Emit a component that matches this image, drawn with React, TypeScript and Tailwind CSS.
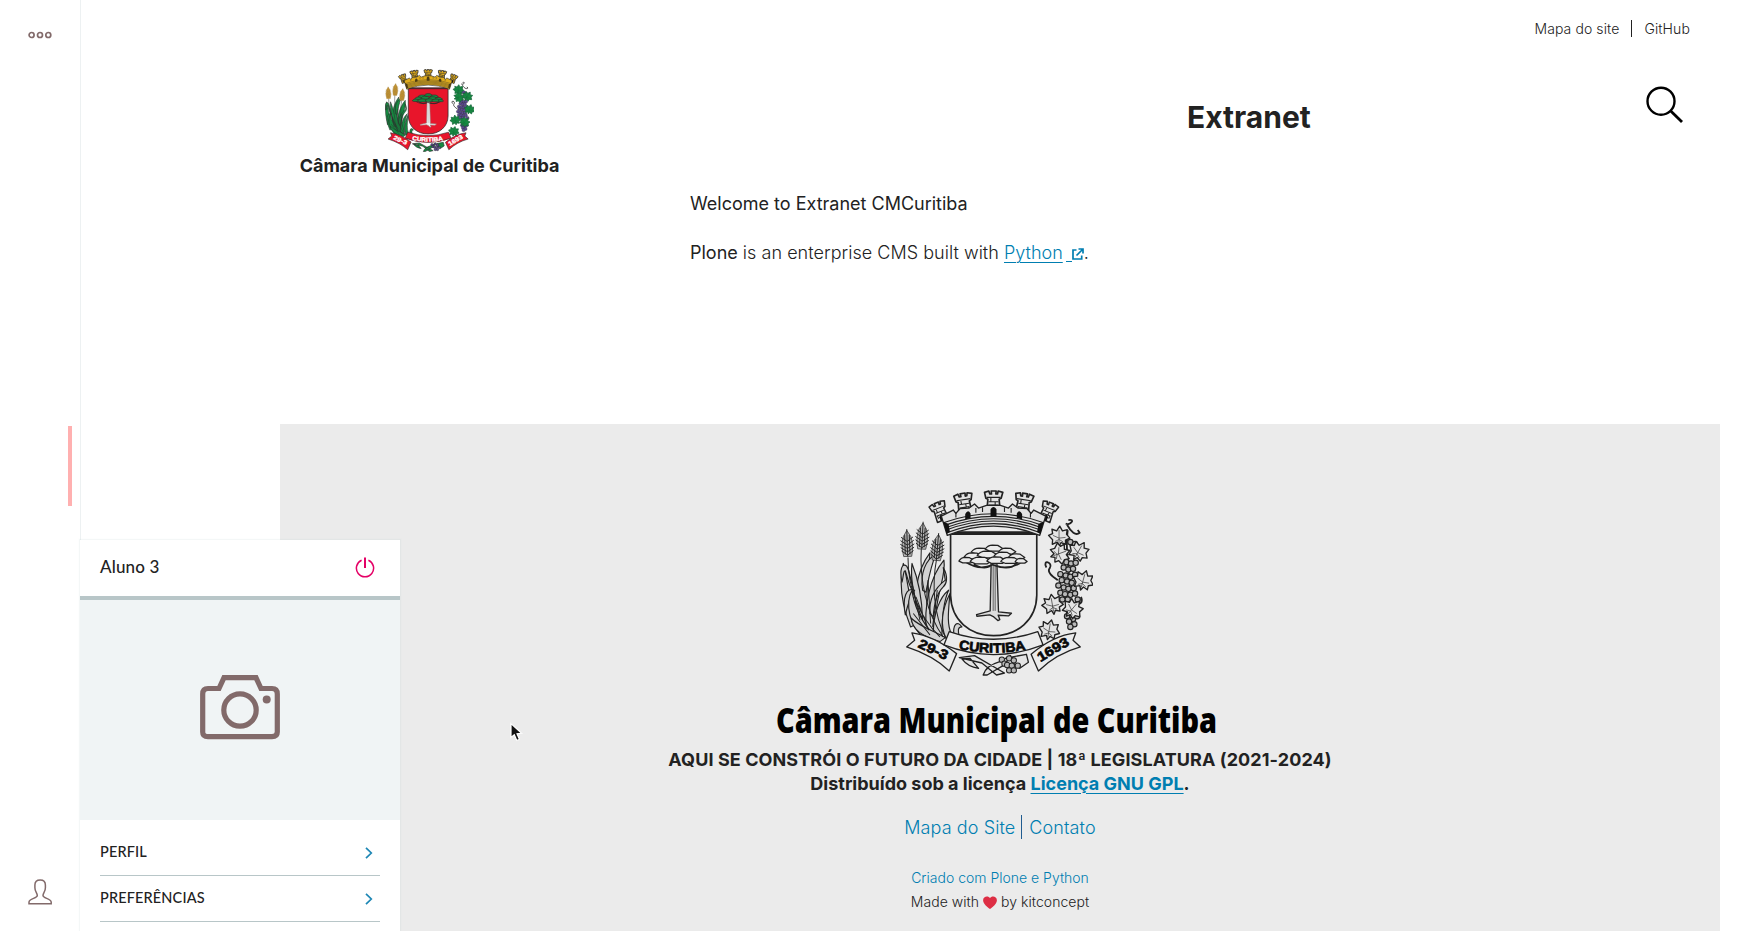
import React from "react";

type CrestProps = { color?: boolean; className?: string };

const leafPath =
  "M0 28 L-5 16 L-20 22 L-19 9 L-31 -4 L-19 -9 L-21 -22 L-7 -17 L2 -31 L10 -17 L24 -21 L22 -7 L32 4 L19 10 L19 22 L6 17 Z";

const vineLeaves = [
  [538, 170, 0],
  [596, 214, 30],
  [540, 220, 70],
  [610, 302, 15],
  [518, 374, -10],
  [578, 386, 40],
  [508, 450, 10],
];

const grapes = [
  [572, 186], [586, 192], [560, 246], [574, 250], [588, 248], [552, 262], [566, 268], [580, 266],
  [542, 282], [558, 286], [572, 290], [586, 284], [546, 300], [562, 304], [576, 308], [536, 316], [552, 322],
  [566, 326], [582, 324], [542, 338], [556, 342], [572, 344], [586, 340], [564, 358], [594, 358], [548, 358],
  [562, 408], [580, 416], [592, 408], [568, 424], [584, 432], [572, 440],
];

const bottomGrapes = [
  [366, 538], [374, 550], [388, 534], [402, 540], [382, 554], [396, 556], [388, 570], [402, 570], [414, 556],
];

const leaves = [
  "M92 440 C60 360 58 300 70 250 C84 300 86 360 112 430 Z",
  "M120 450 C92 360 110 270 150 218 C146 280 134 360 146 440 Z",
  "M140 460 C130 380 150 290 192 240 C200 290 166 340 162 456 Z",
  "M66 306 C58 270 66 246 80 258 C92 276 88 300 104 330 C96 344 84 300 76 272 C70 270 70 292 66 306 Z",
  "M96 250 C90 300 104 360 128 420 C126 350 116 300 96 250 Z",
  "M160 460 C160 400 180 350 206 330 C188 370 186 420 186 466 Z",
  "M76 404 C66 350 80 320 104 330 C90 350 84 370 76 404 Z",
  "M130 470 C90 440 74 370 96 330 C104 390 130 430 160 462 Z",
  "M196 472 C160 450 120 440 94 414 C96 446 130 470 180 484 Z",
  "M198 474 C178 430 190 380 210 340 C206 390 200 430 214 460 Z",
  "M128 330 C120 280 136 240 168 222 C152 258 146 296 138 336 Z",
  "M150 400 C146 350 170 320 196 300 L190 262 C206 290 200 312 190 320 C170 340 162 370 160 410 Z",
  "M222 468 C218 430 232 420 246 440 C234 440 232 452 240 468 Z",
];

function Tower({ x, y, r, s = 1, fill }: { x: number; y: number; r: number; s?: number; fill: string }) {
  return (
    <g transform={`translate(${x} ${y}) rotate(${r}) scale(${s})`}>
      <path
        d="M-27 -24 L-14 -28 L-11 -19 L-6 -19 L-7 -28 L8 -28 L7 -19 L12 -19 L14 -28 L28 -24 L23 -6 L17 -3 L20 34 L-20 34 L-17 -3 L-23 -6 Z"
        fill={fill}
        strokeWidth="5"
      />
      <path d="M-21 -9 H21 M-15 4 H15 M-15 14 H15 M-8 -9 V4 M5 4 V14 M-12 14 V24 M12 14 V24" strokeWidth="3.2" fill="none" />
      <path d="M-8 34 V20 Q0 8 8 20 V34 Z" fill="#111" stroke="none" />
    </g>
  );
}

function Crest({ color = false, className }: CrestProps) {
  const ink = color ? "#2b2b2b" : "#222222";
  const gold = color ? "#e0ac1c" : "#e2e2e2";
  const corn = color ? "#cf9d38" : "#b4b4b4";
  const green = color ? "#168a41" : "#d2d2d2";
  const vine = color ? "#168a41" : "#e4e4e4";
  const vineInk = color ? "#17633a" : ink;
  const purple = color ? "#5b4b91" : "#b8b8b8";
  const red = color ? "#e8152b" : "#ebebeb";
  const letter = color ? "#ffffff" : "#080808";
  const topPath = color ? "ribbon-c" : "ribbon-m";
  return (
    <svg className={className} viewBox="60 30 580 557" preserveAspectRatio="none" stroke={ink} strokeLinejoin="round">
      {leaves.map((d, i) => (
        <path key={i} d={d} fill={green} strokeWidth="3.5" />
      ))}
      <path
        d="M84 232 C84 320 110 400 180 470 M124 204 C118 300 140 400 190 470 M170 236 C156 310 160 400 196 470 M108 350 L146 450 M144 300 L152 430 M92 290 L120 420 M172 330 L158 440 M100 400 L150 464"
        fill="none"
        strokeWidth="3"
      />
      {[
        [82, 195, -2],
        [127, 173, 3],
        [172, 207, 5],
      ].map(([x, y, r]) => (
        <g key={x} transform={`translate(${x} ${y}) rotate(${r})`}>
          <path
            d="M-12 34 Q-20 0 -11 -26 L0 -44 L11 -26 Q20 0 12 34 Z"
            fill={corn}
            stroke={color ? "#9c7830" : ink}
            strokeWidth="2"
          />
          <path
            d="M-18 -24 L0 -11 L18 -24 M-20 -14 L0 0 L20 -14 M-21 -3 L0 10 L21 -3 M-20 7 L0 20 L20 7 M-18 17 L0 30 L18 17 M0 -48 V34 M-7 -30 V28 M7 -30 V28"
            fill="none"
            stroke={color ? "#8a6a2c" : ink}
            strokeWidth={color ? "1.5" : "2.8"}
          />
        </g>
      ))}

      <path
        d="M566 120 C590 116 570 138 558 130 M562 134 C574 156 588 168 600 158 L594 150 M564 150 C552 230 580 300 566 350 C552 400 570 430 574 446 M500 262 C486 236 522 246 510 264 C500 276 520 290 534 300 M604 350 C612 370 596 376 590 366"
        fill="none"
        strokeWidth="5.5"
      />
      {grapes.map(([x, y]) => (
        <circle key={`${x}-${y}`} cx={x} cy={y} r={color ? 11 : 8} fill={purple} strokeWidth={color ? 2 : 3.5} />
      ))}
      {vineLeaves.map(([x, y, r]) => (
        <g key={`${x}-${y}`} transform={`translate(${x} ${y}) rotate(${r}) scale(${color ? 1.12 : 1.02})`} stroke={vineInk}>
          <path d={leafPath} fill={vine} strokeWidth="4" />
          <path d="M0 20 L0 -20 M0 4 L-18 -4 M0 4 L19 2 M0 8 L-12 14 M0 8 L12 15" fill="none" strokeWidth="1.8" />
        </g>
      ))}

      <path d="M212 156 V345 C214 420 270 466 341 466 C412 466 470 420 471 345 V156 Z" fill={red} strokeWidth="5" />
      <path d="M214 162 H470" strokeWidth="6" />

      <Tower x={178} y={92} r={-22} s={0.9} fill={gold} />
      <Tower x={505} y={92} r={22} s={0.9} fill={gold} />
      <Tower x={252} y={68} r={-9} fill={gold} />
      <Tower x={431} y={68} r={9} fill={gold} />
      <Tower x={341} y={61} r={0} fill={gold} />
      <path
        d="M184 108 L220 90 L228 100 L240 86 L268 84 L284 72 L296 84 L320 76 L362 76 L386 84 L398 72 L414 84 L442 86 L454 100 L462 90 L498 108 L480 166 Q341 110 202 166 Z"
        fill={gold}
        strokeWidth="4"
      />
      <path
        d="M190 128 Q341 74 492 128 M194 136 Q341 82 488 136 M196 143 Q341 89 486 143 M199 150 Q341 96 483 150 M200 158 Q341 103 482 158 M228 98 V112 M288 84 V98 M308 82 V96 M374 82 V96 M394 84 V98 M452 96 V112"
        fill="none"
        strokeWidth={color ? "2.4" : "3.4"}
      />
      <path
        d="M256 118 V102 Q264 86 272 100 V114 Z M332 109 V88 Q341 74 350 88 V109 Z M411 114 V100 Q419 86 427 102 V118 Z M190 124 L206 132 L210 156 L200 162 Z M492 124 L476 132 L472 156 L482 162 Z"
        fill={color ? "#4a3b12" : "#111"}
        stroke="none"
      />

      <path
        d="M334 244 L331 392 L290 403 L291 408 L330 404 L342 410 L354 421 L360 418 L355 405 L386 407 L395 399 L356 395 L351 244 Z"
        fill={color ? "#f2f2f2" : "#dcdcdc"}
        stroke={color ? "#9b8080" : ink}
        strokeWidth="4"
      />
      <path d="M340 250 V392 M346 250 V392" strokeWidth={color ? "0.8" : "2"} />
      <path
        d="M260 247 Q300 272 338 254 Q380 272 422 249 M282 252 Q310 270 332 258 M352 258 Q390 270 408 252"
        fill="none"
        strokeWidth="5"
      />
      {[
        [303, 213, 29, 9], [343, 204, 27, 9], [382, 213, 26, 9], [280, 227, 27, 9], [323, 223, 31, 10],
        [371, 226, 29, 10], [410, 230, 25, 9], [260, 240, 23, 8], [303, 241, 32, 10], [350, 240, 29, 10],
        [392, 241, 29, 9], [424, 242, 18, 7],
      ].map(([x, y, rx, ry]) => (
        <path
          key={`${x}-${y}`}
          transform={`translate(${x} ${y})`}
          d={`M${-rx} 3 Q${-rx * 0.7} ${-ry} ${-rx * 0.2} ${-ry} L${rx * 0.4} ${-ry * 0.9} L${rx} 2 L${rx * 0.6} ${ry} L${-rx * 0.5} ${ry} Z`}
          fill={color ? "#168a41" : "#ebebeb"}
          strokeWidth="3.8"
        />
      ))}

      <path
        d="M238 532 L284 526 L374 578 L350 584 L306 548 Z M246 536 Q264 560 296 564 L270 534 Z M398 530 L440 522 L446 546 L420 564 L400 548 Z M310 584 Q318 556 360 544 L392 526 L376 552 L322 584 Z"
        fill={vine}
        strokeWidth="4"
      />
      {bottomGrapes.map(([x, y]) => (
        <circle key={`${x}-${y}`} cx={x} cy={y} r="8" fill={purple} strokeWidth="3" />
      ))}

      <path d="M96 458 Q160 466 230 520 L208 572 Q160 526 80 500 L104 480 Z" fill={red} strokeWidth="4" />
      <path d="M588 458 Q520 466 454 522 L476 572 Q530 520 602 500 L580 480 Z" fill={red} strokeWidth="4" />
      <path d="M208 454 Q341 500 474 454 L490 494 Q341 552 192 494 Z" fill={red} strokeWidth="4" />
      <path id={topPath} d="M236 506 Q341 528 446 506" fill="none" stroke="none" />
      <g fill={letter} stroke={letter} strokeWidth="2" fontFamily="'Liberation Sans', Arial, sans-serif" fontWeight="700">
        <text fontSize="40" textLength="204" lengthAdjust="spacingAndGlyphs">
          <textPath href={`#${topPath}`}>CURITIBA</textPath>
        </text>
        <text fontSize="40" transform="translate(112 500) rotate(25)" textLength="94" lengthAdjust="spacingAndGlyphs">
          29-3
        </text>
        <text fontSize="40" transform="translate(482 546) rotate(-31)" textLength="104" lengthAdjust="spacingAndGlyphs">
          1693
        </text>
      </g>
    </svg>
  );
}

function Toolbar() {
  return (
    <aside className="flex w-[81px] shrink-0 flex-col items-center justify-between border-r border-[#edf1f2] bg-white pr-px">
      <div className="flex flex-col items-center">
        <svg className="mt-[26px] h-[18px] w-6" viewBox="0 0 24 18" fill="none" stroke="#826a6a" strokeWidth="1.7">
          <circle cx="3.6" cy="9" r="2.5" />
          <circle cx="12" cy="9" r="2.5" />
          <circle cx="20.3" cy="9" r="2.5" />
        </svg>
        <div className="mt-[382px] mr-[-60px] h-20 w-1 bg-[#ffb0b0]" />
      </div>
      <svg className="mb-[26px] h-[26px] w-6" viewBox="0 0 24 26" fill="none" stroke="#826a6a" strokeWidth="1.5">
        <path d="M1 24.8 V23 C1.4 19.5 9.3 19.3 9.3 16.5 C9.3 14 6.9 13 6.9 8.7 V6 C6.9 2.9 9 1 12.2 1 C15.3 1 17.4 2.9 17.4 6 V8.7 C17.4 13 15 14 15 16.5 C15 19.3 22.7 19.5 23.2 23 V24.8 Z" />
      </svg>
    </aside>
  );
}

function MenuRow({ label }: { label: string }) {
  return (
    <li className="flex h-[46px] items-center justify-between border-b border-[#b8c6c8]">
      <span className="pb-[2px] text-[14.5px] tracking-[0.14px]">{label}</span>
      <svg className="mr-[7.5px] h-3 w-2" viewBox="0 0 8 12" fill="none" stroke="#1e87b5" strokeWidth="1.7">
        <path d="M1 0.8 L6.3 6 L1 11.2" />
      </svg>
    </li>
  );
}

function UserPanel() {
  return (
    <section className="absolute top-[540px] left-20 flex h-[391px] w-80 flex-col overflow-hidden bg-white font-['Lato',sans-serif] font-medium shadow-[0_0_1px_1px_rgba(184,198,200,0.15)]">
      <header className="flex h-[60px] shrink-0 items-center justify-between border-b-4 border-[#b8c6c8] pr-[25px] pb-[2px] pl-5">
        <span className="text-[17px] leading-6 tracking-[0.15px]">Aluno 3</span>
        <svg className="h-[21px] w-5" viewBox="0 0 20 21" fill="none" stroke="#e40166">
          <path d="M6.6 3.3 A8.6 8.6 0 1 0 13.4 3.3" strokeWidth="1.5" />
          <path d="M10 0.5 V11" strokeWidth="2" />
        </svg>
      </header>
      <div className="flex h-[220px] shrink-0 items-center justify-center bg-[#f0f4f5] pb-[5px]">
        <svg className="h-[65px] w-20" viewBox="0 0 80 65" fill="none" stroke="#826a6a" strokeWidth="5.2">
          <path d="M8 13.5 H19 L24 2.7 H56 L61 13.5 H72 Q77.3 13.5 77.3 19 V57 Q77.3 61.7 72 61.7 H8 Q2.7 61.7 2.7 57 V19 Q2.7 13.5 8 13.5 Z" />
          <circle cx="40" cy="35" r="16.2" />
          <circle cx="66.7" cy="24.5" r="4" fill="#826a6a" stroke="none" />
        </svg>
      </div>
      <ul className="mx-5 pt-[10px]">
        <MenuRow label="PERFIL" />
        <MenuRow label="PREFERÊNCIAS" />
      </ul>
    </section>
  );
}

function Header() {
  return (
    <header className="flex h-[180px] shrink-0 justify-between">
      <div className="ml-5 flex w-[259px] flex-col items-center pt-[69px]">
        <Crest color className="h-[83px] w-[89px]" />
        <span className="mt-[2px] text-[18px] leading-6 font-bold whitespace-nowrap">Câmara Municipal de Curitiba</span>
      </div>
      <div className="flex flex-col items-end pr-[30px]">
        <nav className="flex h-[57px] items-center text-[14px] font-light">
          <a className="tracking-[0.09px]">Mapa do site</a>
          <span className="mr-3 ml-3 h-[17px] w-px bg-[#222]" />
          <a className="tracking-[0.12px]">GitHub</a>
        </nav>
        <div className="flex w-[503px] justify-between">
          <h1 className="mt-[40px] text-[30px] leading-10 font-bold">Extranet</h1>
          <svg className="mt-[29px] mr-[7px] h-[38px] w-[38px]" viewBox="0 0 38 38" fill="none" stroke="#000" strokeWidth="2.4">
            <circle cx="16" cy="15.2" r="13.5" />
            <path d="M25.5 24.7 L37 36" strokeWidth="2.8" />
          </svg>
        </div>
      </div>
    </header>
  );
}

function Footer() {
  return (
    <footer className="flex h-[507px] flex-col items-center bg-[#ebebeb] pt-[66px]">
      <Crest className="h-[186px] w-[193px] -translate-x-1" />
      <svg className="mt-[12px] h-[60px] w-[450px] -translate-x-1" viewBox="0 0 450 60">
        <text
          x="5"
          y="45"
          fontFamily="'Open Sans', 'Noto Sans', sans-serif"
          fontSize="35"
          fontWeight="800"
          textLength="441"
          lengthAdjust="spacingAndGlyphs"
        >
          Câmara Municipal de Curitiba
        </text>
      </svg>
      <div className="text-center text-[18px] leading-6 font-bold">
        <p className="tracking-[0.09px]">AQUI SE CONSTRÓI O FUTURO DA CIDADE | 18ª LEGISLATURA (2021-2024)</p>
        <p>
          Distribuído sob a licença{" "}
          <a className="text-[#007eb1] underline decoration-1 underline-offset-[3px]">Licença GNU GPL</a>.
        </p>
      </div>
      <nav className="mt-[19px] flex h-6 items-center text-[18px] font-light text-[#007eb1]">
        <a className="tracking-[0.1px]">Mapa do Site</a>
        <span className="mr-[7px] ml-[6px] h-6 w-px bg-[#205c90]" />
        <a className="tracking-[0.1px]">Contato</a>
      </nav>
      <div className="mt-[27px] text-center text-[14px] leading-6 font-light">
        <p className="text-[#007eb1]">Criado com Plone e Python</p>
        <p className="flex items-center justify-center tracking-[0.04px]">
          Made with
          <svg className="mx-1 h-[13px] w-[14px]" viewBox="0 0 14 13" fill="#dd2e44">
            <path d="M7 2 C5.7 -0.4 0.2 -0.4 0.1 4.2 C0 7.8 4.1 11 7 13 C9.9 11 14 7.8 13.9 4.2 C13.8 -0.4 8.3 -0.4 7 2 Z" />
          </svg>
          by kitconcept
        </p>
      </div>
    </footer>
  );
}

export default function App() {
  return (
    <div className="relative flex h-[931px] w-[1742px] overflow-hidden bg-white font-['Inter',sans-serif] text-[#222]">
      <Toolbar />
      <div className="ml-[199px] flex w-[1440px] flex-col">
        <Header />
        <main className="h-[244px] shrink-0 pt-3 pl-[410px] text-[18px] leading-6">
          <p>Welcome to Extranet CMCuritiba</p>
          <p className="mt-[25px] font-light">
            <span className="font-normal">Plone</span>
            <span className="tracking-[0.03px]"> is an enterprise CMS built with </span>
            <a className="text-[#007eb1]">
              <span className="underline decoration-1 underline-offset-[3px]">Python</span>
              <span className="ml-[3px] inline-block w-[6px] translate-y-[3px] border-b border-[#007eb1]" />
              <svg className="inline h-3 w-3 align-[-1px]" viewBox="0 0 12 12" fill="none" stroke="#007eb1" strokeWidth="1.7">
                <path d="M4.5 2 H1 V11 H9.7 V7.5 M6.5 1 H11 V5.5 M11 1 L4.5 7.5" />
              </svg>
            </a>
            .
          </p>
        </main>
        <Footer />
      </div>
      <UserPanel />
      <svg className="absolute top-[722px] left-[510px] h-5 w-[13px]" viewBox="0 0 13 20">
        <path d="M1 1.5 V15.5 L4.3 12.7 L6.8 18.5 L9.4 17.3 L7 11.7 L11.6 11.3 Z" fill="#111" stroke="#fff" strokeWidth="1.2" />
      </svg>
    </div>
  );
}
